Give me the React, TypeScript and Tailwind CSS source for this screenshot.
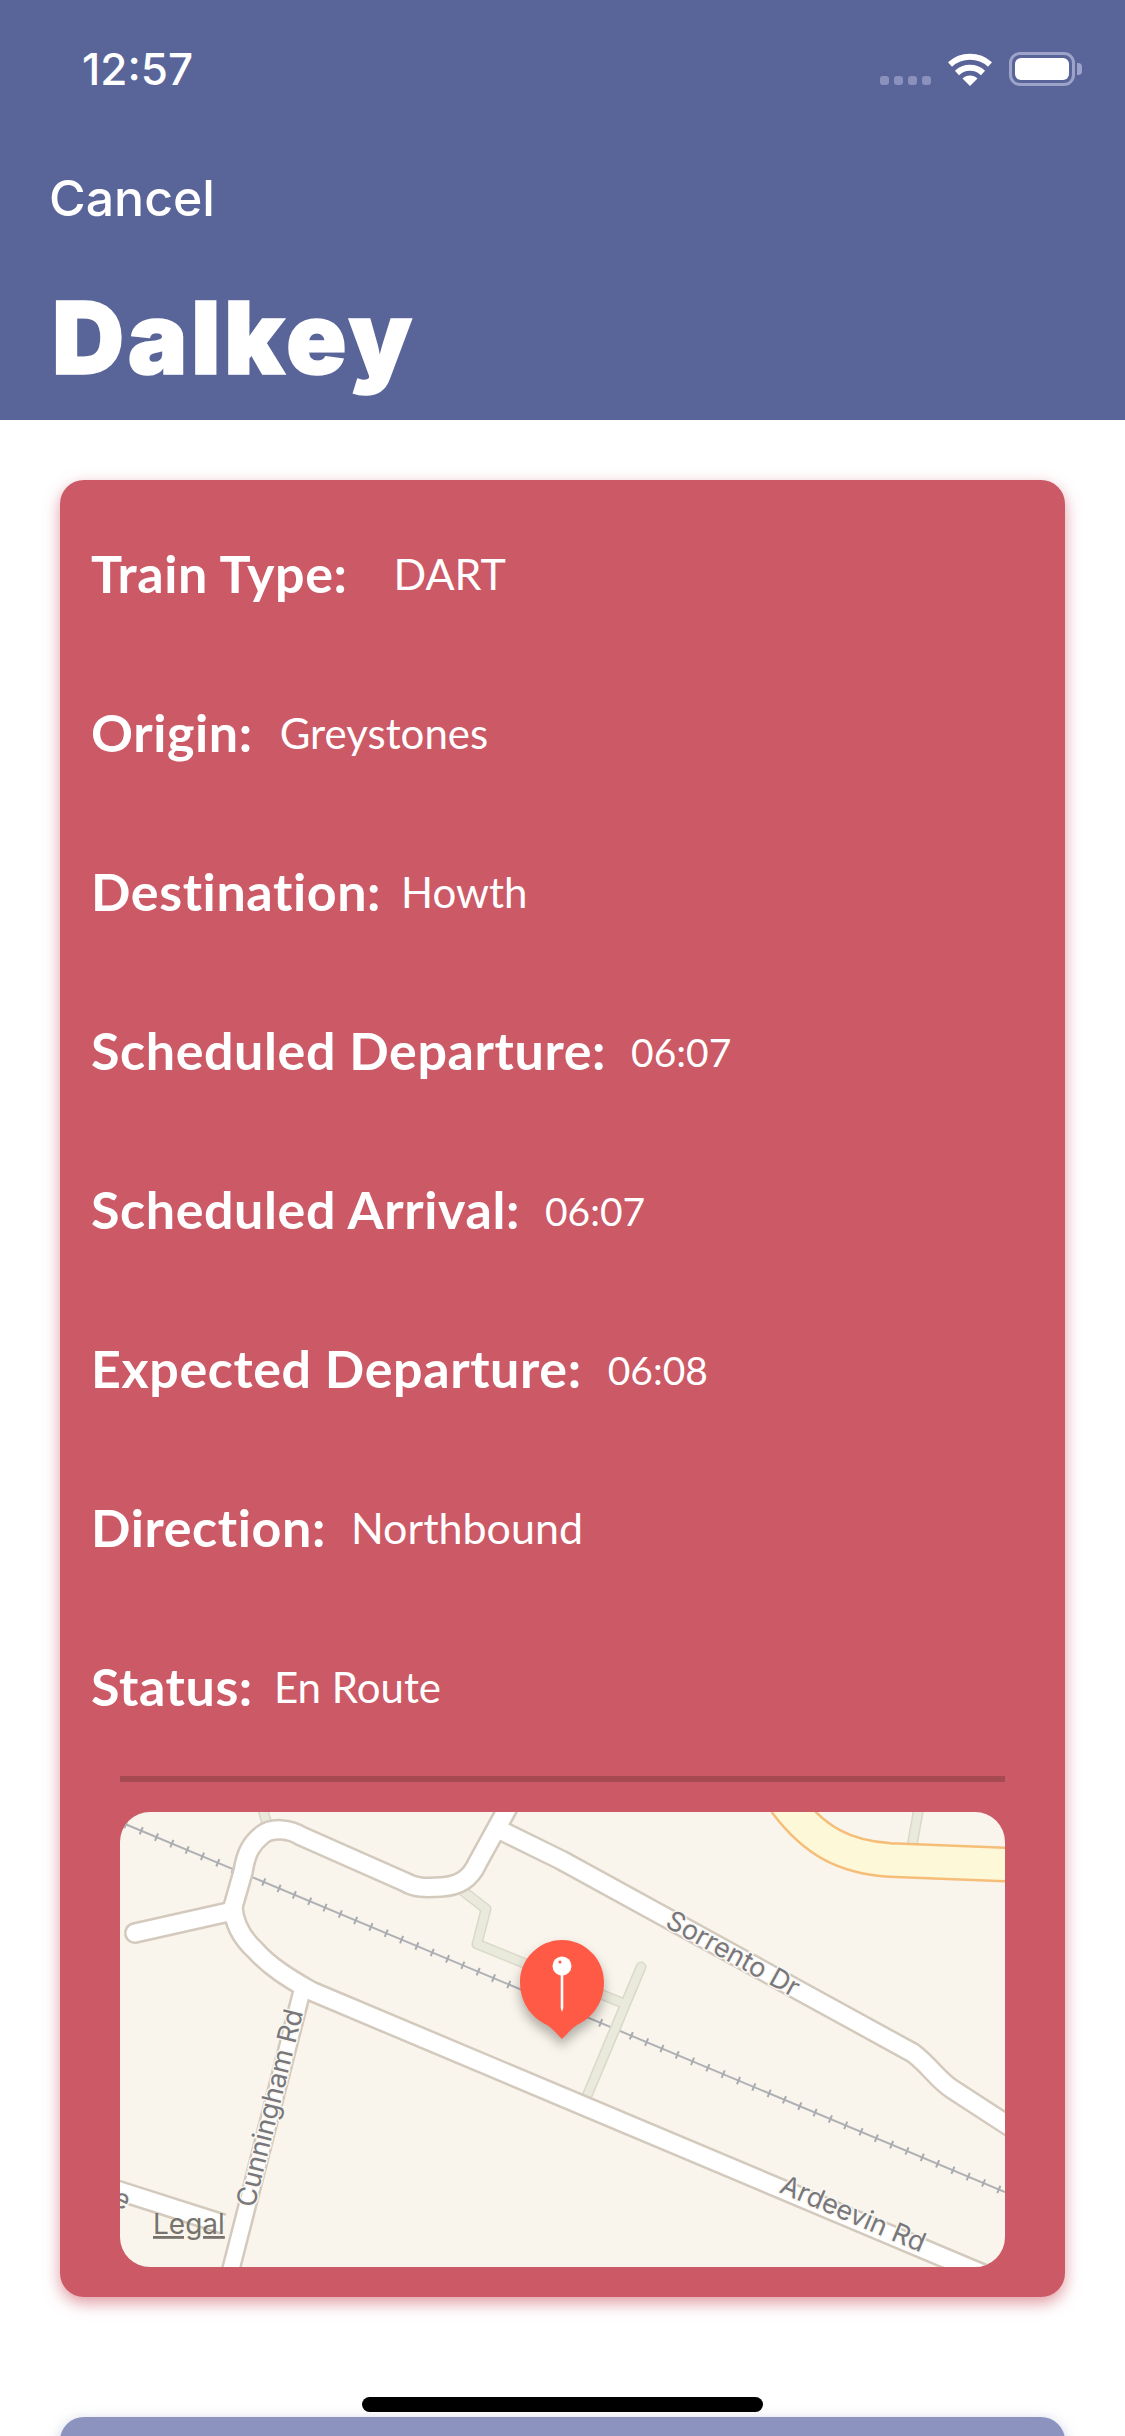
import React from "react";

const rows = [
  { label: "Train Type:", value: "DART", valueClass: "ml-[46px] text-[43px]" },
  { label: "Origin:", value: "Greystones", valueClass: "ml-[27px] text-[42px]" },
  { label: "Destination:", value: "Howth", valueClass: "ml-[20px] text-[42px]" },
  { label: "Scheduled Departure:", value: "06:07", valueClass: "ml-[25px] text-[39px]" },
  { label: "Scheduled Arrival:", value: "06:07", valueClass: "ml-[25px] text-[39px]" },
  { label: "Expected Departure:", value: "06:08", valueClass: "ml-[26px] text-[39px]" },
  { label: "Direction:", value: "Northbound", valueClass: "ml-[25px] text-[43px]" },
  { label: "Status:", value: "En Route", valueClass: "ml-[21px] text-[42px]" },
];

// Status bar icons
const StatusIcons = () => (
  <div className="flex items-end gap-[16px]">
    <div className="flex gap-[5px] mb-[1px]">
      <span className="w-[9px] h-[9px] rounded-[3px] bg-[#8b90bc]" />
      <span className="w-[9px] h-[9px] rounded-[3px] bg-[#8b90bc]" />
      <span className="w-[9px] h-[9px] rounded-[3px] bg-[#8b90bc]" />
      <span className="w-[9px] h-[9px] rounded-[3px] bg-[#8b90bc]" />
    </div>
    <svg width="46" height="34" viewBox="0 0 46 34" fill="none">
      <path d="M3 12.5A30 30 0 0 1 43 12.5" stroke="#fff" strokeWidth="6" />
      <path d="M10 21A19 19 0 0 1 36 21" stroke="#fff" strokeWidth="6" />
      <path d="M23 34L15.5 26.5A10.6 10.6 0 0 1 30.5 26.5Z" fill="#fff" />
    </svg>
    <div className="flex items-center gap-[2px]">
      <div className="w-[66px] h-[34px] rounded-[11px] border-[3px] border-[#9da2c9] p-[3px]">
        <div className="w-full h-full rounded-[6px] bg-white" />
      </div>
      <div className="w-[5px] h-[12px] rounded-r-[4px] bg-[#9da2c9]" />
    </div>
  </div>
);

const labelStyle = {
  fontFamily: "Inter, sans-serif",
  fontSize: 27,
  fill: "#77777c",
  stroke: "#fbf8f2",
  strokeWidth: 3,
  paintOrder: "stroke",
} as React.CSSProperties;

const loopRoad =
  "M391 -10L358 50C350 68 338 74 321 75C305 76 295 76 285 70L181 24C170 17 152 15 142 23C132 31 126 40 123 60L113 95C114 112 122 126 135 138C150 155 170 167 191 179L870 465";
const sorrentoRoad = "M382 19L441 48L793 241C810 254 818 268 832 277L895 318";

// Map tile drawn as an svg
const MapTile = () => (
  <svg width="885" height="455" viewBox="0 0 885 455" className="block">
    <rect width="885" height="455" fill="#f9f5ec" />

    {/* railway */}
    <path d="M5 12L885 380" stroke="#b0b1b5" strokeWidth="2" fill="none" />
    <path d="M5 12L885 380" stroke="#a8abb0" strokeWidth="8" strokeDasharray="2 14.6" fill="none" />

    {/* footpaths */}
    <g fill="none" stroke="#d9d9c8" strokeWidth="11" strokeLinejoin="round" strokeLinecap="round">
      <path d="M343 79L366 97L357 132L500 190" />
      <path d="M521 155L467 284" />
      <path d="M142 -5L148 15" />
      <path d="M799 -5L792 34" />
    </g>
    <g fill="none" stroke="#e9e9dc" strokeWidth="8" strokeLinejoin="round" strokeLinecap="round">
      <path d="M343 79L366 97L357 132L500 190" />
      <path d="M521 155L467 284" />
      <path d="M142 -5L148 15" />
      <path d="M799 -5L792 34" />
    </g>

    {/* yellow main road */}
    <path d="M665 -10C695 30 725 45 770 48L895 53" fill="none" stroke="#f6bd78" strokeWidth="36" />
    <path d="M665 -10C695 30 725 45 770 48L895 53" fill="none" stroke="#fdf9d8" strokeWidth="31" />

    {/* streets, casing then fill */}
    <g fill="none" stroke="#d3cabd" strokeWidth="22" strokeLinejoin="round">
      <path d={loopRoad} />
      <path d="M113 99L15 121" strokeLinecap="round" />
      <path d={sorrentoRoad} />
      <path d="M-10 376L103 412" />
    </g>
    <path d="M182 179L109 465" fill="none" stroke="#d3cabd" strokeWidth="20" />
    <path d="M182 179L109 465" fill="none" stroke="#ffffff" strokeWidth="15" />
    <g fill="none" stroke="#ffffff" strokeWidth="17" strokeLinejoin="round">
      <path d={loopRoad} />
      <path d="M113 99L15 121" strokeLinecap="round" />
      <path d={sorrentoRoad} />
      <path d="M-10 376L103 412" />
    </g>

    {/* street names */}
    <text x="613" y="151" textAnchor="middle" transform="rotate(29 613 142)" style={labelStyle}>Sorrento Dr</text>
    <text x="733" y="411" textAnchor="middle" transform="rotate(23 733 402)" style={labelStyle}>Ardeevin Rd</text>
    <text x="150" y="305" textAnchor="middle" transform="rotate(-76 150 296)" style={labelStyle}>Cunningham Rd</text>
    <text x="-9" y="392" transform="rotate(25 -9 392)" style={labelStyle}>e</text>
    <text x="33" y="422" textDecoration="underline" style={{ fontFamily: "Inter, sans-serif", fontSize: 28, fill: "#76736c" }}>Legal</text>

    {/* pin */}
    <g style={{ filter: "drop-shadow(0 7px 6px rgba(0,0,0,0.3))" }}>
      <path d="M442 128C465 128 484 147 484 170C484 193 470 207 457 213C452 216 447 222 442 227C437 222 432 216 427 213C414 207 400 193 400 170C400 147 419 128 442 128Z" fill="#ff5a45" />
    </g>
    <circle cx="442" cy="154" r="9.5" fill="#fff" />
    <circle cx="440" cy="150" r="1.6" fill="#ff5a45" />
    <path d="M440.7 160H443.3V196L442 200L440.7 196Z" fill="#fff" />
  </svg>
);

export default function App() {
  return (
    <div className="relative w-[1125px] h-[2436px] overflow-hidden bg-white">
      <header className="h-[420px] bg-[#596599] text-white">
        <div className="flex justify-between items-start pt-[52px] pl-[82px] pr-[43px] h-[160px]">
          <span className="font-['Inter',sans-serif] font-medium text-[44px] leading-[34px]">12:57</span>
          <StatusIcons />
        </div>
        <div className="pl-[49px] font-['Inter',sans-serif] font-[450] text-[50px] leading-[74px] h-[112px] pt-[1px]">Cancel</div>
        <h1 className="pl-[52px] pt-[6px] font-['Inter',sans-serif] font-black text-[100px] leading-[120px] tracking-[3.5px] [-webkit-text-stroke:1.5px_white]">Dalkey</h1>
      </header>

      <section className="mt-[60px] mx-[60px] bg-[#cc5966] rounded-[24px] pt-[14px] pb-[30px] shadow-[0_6px_16px_rgba(204,89,102,0.6)] font-['Lato',sans-serif] text-white">
        {rows.map((row) => (
          <div key={row.label} className="h-[159px] pl-[31px] flex items-baseline leading-[159px]">
            <span className="text-[52px] font-bold tracking-[0.6px]">{row.label}</span>
            <span className={`-translate-y-[3px] ${row.valueClass}`}>{row.value}</span>
          </div>
        ))}
        <div className="mt-[10px] mx-[60px] h-[6px] bg-[#a64a52]" />
        <div className="mt-[30px] mx-[60px] rounded-[30px] overflow-hidden">
          <MapTile />
        </div>
      </section>

      <section className="mt-[120px] mx-[60px] h-[200px] bg-[#8d93bf] rounded-[24px] shadow-[0_4px_14px_rgba(141,147,191,0.55)]" />

      {/* home indicator */}
      <div className="absolute left-[362px] top-[2397px] w-[401px] h-[15px] rounded-full bg-black" />
    </div>
  );
}
